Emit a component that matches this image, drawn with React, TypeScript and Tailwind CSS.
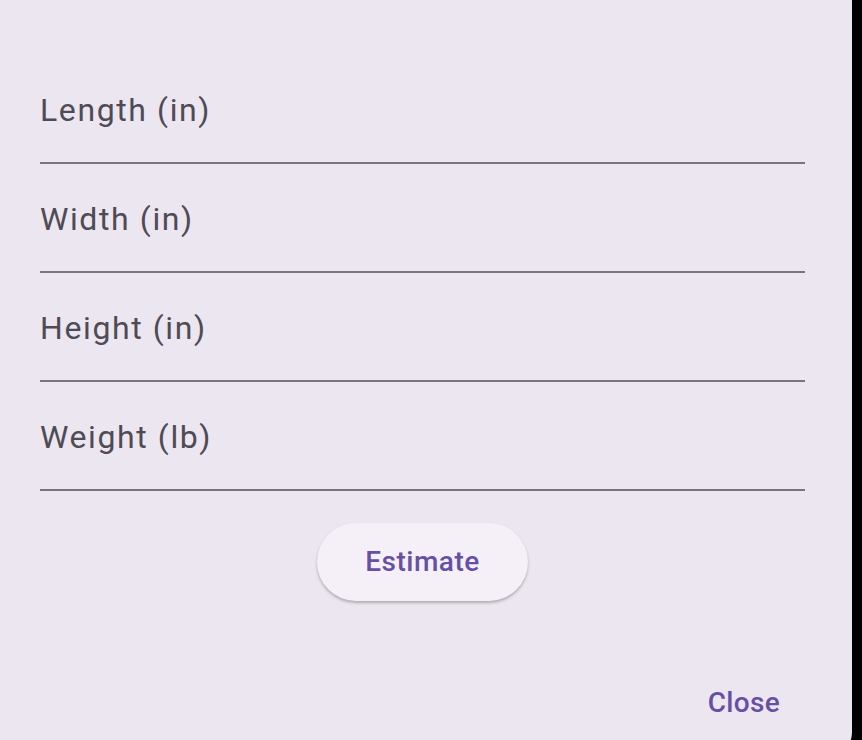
const fields = ["Length (in)", "Width (in)", "Height (in)", "Weight (lb)"];

const App: React.FC = () => {
  return (
    <div
      className="flex h-[740px] w-[862px] overflow-hidden bg-black"
      style={{ fontFamily: "Roboto, 'Noto Sans', sans-serif" }}
    >
      <div className="flex h-[760px] w-[852px] flex-col rounded-br-[28px] bg-[#ECE6F0]">
        <div className="flex flex-col pl-[40px] pr-[47px] pt-[55px]">
          {fields.map((label) => (
            <div
              key={label}
              className="flex h-[109px] items-center border-b-2 border-[#79747E] pt-[2px]"
            >
              <span className="text-[32px] tracking-[1.6px] text-[#4F4B55]">
                {label}
              </span>
            </div>
          ))}

          {/* Estimate button, centred under the fields */}
          <div className="flex justify-center pt-[32px]">
            <button className="h-[78px] w-[211px] rounded-full bg-[#F5F0F8] text-[28px] font-medium tracking-[0.5px] text-[#6750A4] shadow-[0_2px_3px_rgba(0,0,0,0.25)]">
              Estimate
            </button>
          </div>
        </div>

        <div className="flex justify-end pr-[48px] pt-[72px]">
          <button className="h-[60px] px-[24px] text-[28px] font-medium tracking-[0.3px] text-[#6750A4]">
            Close
          </button>
        </div>
      </div>
    </div>
  );
};

export default App;
